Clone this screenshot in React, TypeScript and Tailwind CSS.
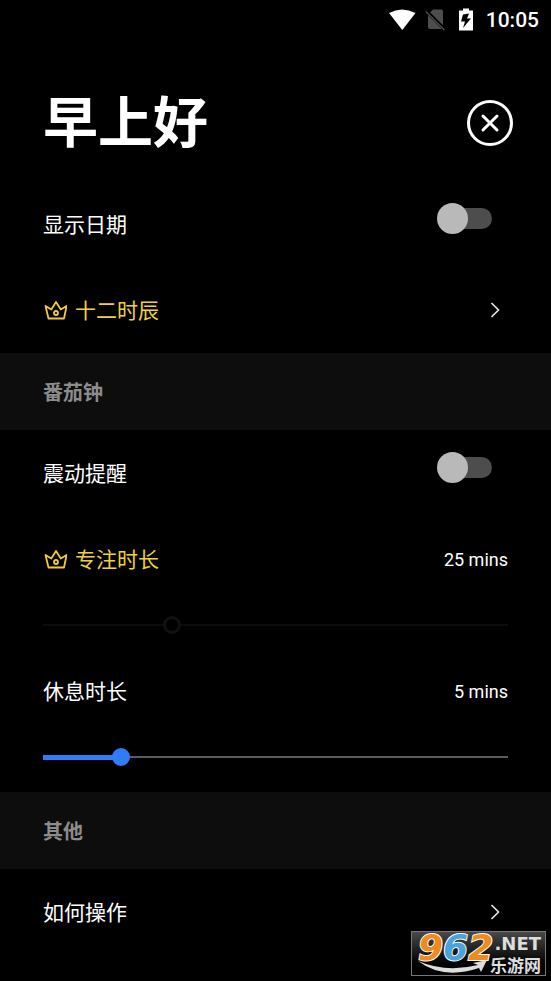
import React, { useState } from "react";

const Crown = () => (
  <svg
    className="h-5 w-6 text-[#f2c83c]"
    viewBox="0 0 24 20"
    fill="none"
    stroke="currentColor"
    strokeWidth="1.8"
    strokeLinejoin="round"
    aria-hidden="true"
  >
    <path d="M2.500 6 L5.500 18.500 H21 L23.600 6 L17.800 9.500 L13 2 L8.300 9.500 Z" />
    <circle cx="13" cy="13" r="2" />
  </svg>
);

const Chevron = () => (
  <svg
    className="mr-2 h-4 w-2.5"
    viewBox="0 0 10 16"
    fill="none"
    stroke="#e8e8e8"
    strokeWidth="1.6"
    aria-hidden="true"
  >
    <path d="M1.5 1 L8.5 8 L1.5 15" />
  </svg>
);

const StatusBar = () => (
  <div className="flex h-10 items-center justify-end pr-3">
    <svg className="h-6 w-7" viewBox="0 0 28 24" fill="#fff" aria-hidden="true">
      <path d="M1 5 Q14 -2 27.500 5 L14.300 22 Z" />
    </svg>
    <svg className="ml-2 h-6 w-6" viewBox="0 0 24 24" aria-hidden="true">
      <path d="M9 1.500 H17 Q19 1.500 19 3.500 V17.500 L6 4.500 Z M4 7 L18 21 H6 Q4 21 4 19 Z" fill="#4d4d4d" />
      <path d="M2 3.500 L20.500 22" stroke="#4d4d4d" strokeWidth="1.600" />
      <path d="M4 3.500 L20.500 20" stroke="#000" strokeWidth="1.200" />
    </svg>
    <svg className="ml-2.5 h-6 w-4" viewBox="0 0 16 24" aria-hidden="true">
      <path d="M5 0.500 H11 V2.500 H15 V22.500 H1 V2.500 H5 Z" fill="#fff" />
      <path d="M11 5.500 L5 6.500 L3 13.500 H7 L5 20 L13 10.500 H9 Z" fill="#000" />
    </svg>
    <span className="ml-3 pt-0.5 font-[Roboto,sans-serif] text-[21px] font-medium">10:05</span>
  </div>
);

const Toggle = ({ id }: { id: string }) => (
  <input
    id={id}
    type="checkbox"
    role="switch"
    className="relative mr-4 mb-3 h-[31px] w-[55px] cursor-pointer appearance-none before:absolute before:top-[5px] before:right-0 before:h-[21px] before:w-[50px] before:rounded-full before:bg-[#4d4d4d] after:absolute after:top-0 after:left-0 after:size-[31px] after:rounded-full after:bg-[#b9b9b9] checked:before:bg-[#2f7cf6]/50 checked:after:left-6 checked:after:bg-[#2f7cf6]"
  />
);

const Row = ({ children }: { children: React.ReactNode }) => (
  <div className="flex h-[86px] items-center justify-between px-[43px] text-[21px]">
    {children}
  </div>
);

const SectionTitle = ({ children }: { children: React.ReactNode }) => (
  <h2 className="flex h-[77px] items-center bg-[#0d0d0d] px-[43px] text-[20px] font-bold text-[#8c8c8c]">
    {children}
  </h2>
);

const Mins = ({ value }: { value: number }) => (
  <span className="font-[Roboto,sans-serif] text-[18px]">{value} mins</span>
);

const Watermark = () => (
  <div className="absolute right-[5px] bottom-[5px] h-[45px] w-[135px] border border-[#777] bg-linear-to-b from-[#4a4a4a] to-black">
    <div className="absolute top-0.5 left-1.5 font-['DejaVu_Sans',sans-serif] text-[36px] leading-7 font-bold italic [paint-order:stroke_fill] [-webkit-text-stroke:2px_#fff]">
      <span className="text-[#f08a1d]">9</span>
      <span className="text-[#4ba3dc]">6</span>
      <span className="text-[#f08a1d]">2</span>
    </div>
    <svg className="absolute bottom-0 left-1.5 h-4 w-[70px]" viewBox="0 0 70 16" aria-hidden="true">
      <path d="M0 2 Q28 14 60 6 L55 4 L69 1 L63 13 L61 9 Q25 21 0 2 Z" fill="#ddd" />
    </svg>
    <div className="absolute top-1 right-1 font-['DejaVu_Sans',sans-serif] text-[18px] leading-4 font-bold text-[#ddd]">
      .NET
    </div>
    <div className="absolute right-1 bottom-0.5 text-[17px] leading-4 font-bold text-[#ddd]">
      乐游网
    </div>
  </div>
);

const App = () => {
  const [rest, setRest] = useState(5);
  const focus = 25;

  return (
    <div className="relative min-h-screen bg-black font-['Noto_Sans_CJK_SC',sans-serif] text-white">
      <StatusBar />

      <header className="flex items-start justify-between pt-15 pr-[38px] pb-[35px] pl-[43px]">
        <h1 className="text-[55px] leading-9 font-bold">早上好</h1>
        <button
          type="button"
          aria-label="关闭"
          className="flex size-[46px] items-center justify-center rounded-full border-[3px] border-white"
        >
          <svg className="size-5" viewBox="0 0 20 20" stroke="#fff" strokeWidth="3" strokeLinecap="round">
            <path d="M3 3 L17 17 M17 3 L3 17" />
          </svg>
        </button>
      </header>

      <main>
        <Row>
          <label htmlFor="show-date">显示日期</label>
          <Toggle id="show-date" />
        </Row>
        <a href="#hours" className="block text-[#f2d13c]">
          <Row>
            <span className="flex items-center gap-2">
              <Crown />
              十二时辰
            </span>
            <Chevron />
          </Row>
        </a>

        <SectionTitle>番茄钟</SectionTitle>
        <Row>
          <label htmlFor="vibrate">震动提醒</label>
          <Toggle id="vibrate" />
        </Row>
        <Row>
          <label htmlFor="focus" className="flex items-center gap-2 text-[#f2d13c]">
            <Crown />
            专注时长
          </label>
          <Mins value={focus} />
        </Row>
        {/* the input is wider than the line by one thumb, so the thumb centre reaches both ends */}
        <div className="mx-[43px] grid h-[46px] items-center *:col-start-1 *:row-start-1">
          <div className="h-0.5 bg-[#0c0c0c]" />
          <input
            id="focus"
            type="range"
            min={0}
            max={90}
            value={focus}
            readOnly
            disabled
            className="-mx-[9px] h-[18px] appearance-none bg-transparent [&::-webkit-slider-thumb]:size-[18px] [&::-webkit-slider-thumb]:appearance-none [&::-webkit-slider-thumb]:rounded-full [&::-webkit-slider-thumb]:border-[3px] [&::-webkit-slider-thumb]:border-[#111] [&::-webkit-slider-thumb]:bg-black"
          />
        </div>
        <Row>
          <label htmlFor="rest">休息时长</label>
          <Mins value={rest} />
        </Row>
        <div className="mx-[43px] mb-3 grid h-[46px] items-center *:col-start-1 *:row-start-1">
          <div className="h-0.5 bg-[#5c5c5c]" />
          <div className="h-[5px] bg-[#2f7cf6]" style={{ width: `${(rest / 30) * 100}%` }} />
          <input
            id="rest"
            type="range"
            min={0}
            max={30}
            value={rest}
            onChange={(e) => setRest(Number(e.target.value))}
            className="-mx-[9px] h-[18px] cursor-pointer appearance-none bg-transparent [&::-webkit-slider-thumb]:size-[18px] [&::-webkit-slider-thumb]:appearance-none [&::-webkit-slider-thumb]:rounded-full [&::-webkit-slider-thumb]:bg-[#2f7cf6]"
          />
        </div>

        <SectionTitle>其他</SectionTitle>
        <a href="#help" className="block">
          <Row>
            如何操作
            <Chevron />
          </Row>
        </a>
      </main>

      <Watermark />
    </div>
  );
};

export default App;
